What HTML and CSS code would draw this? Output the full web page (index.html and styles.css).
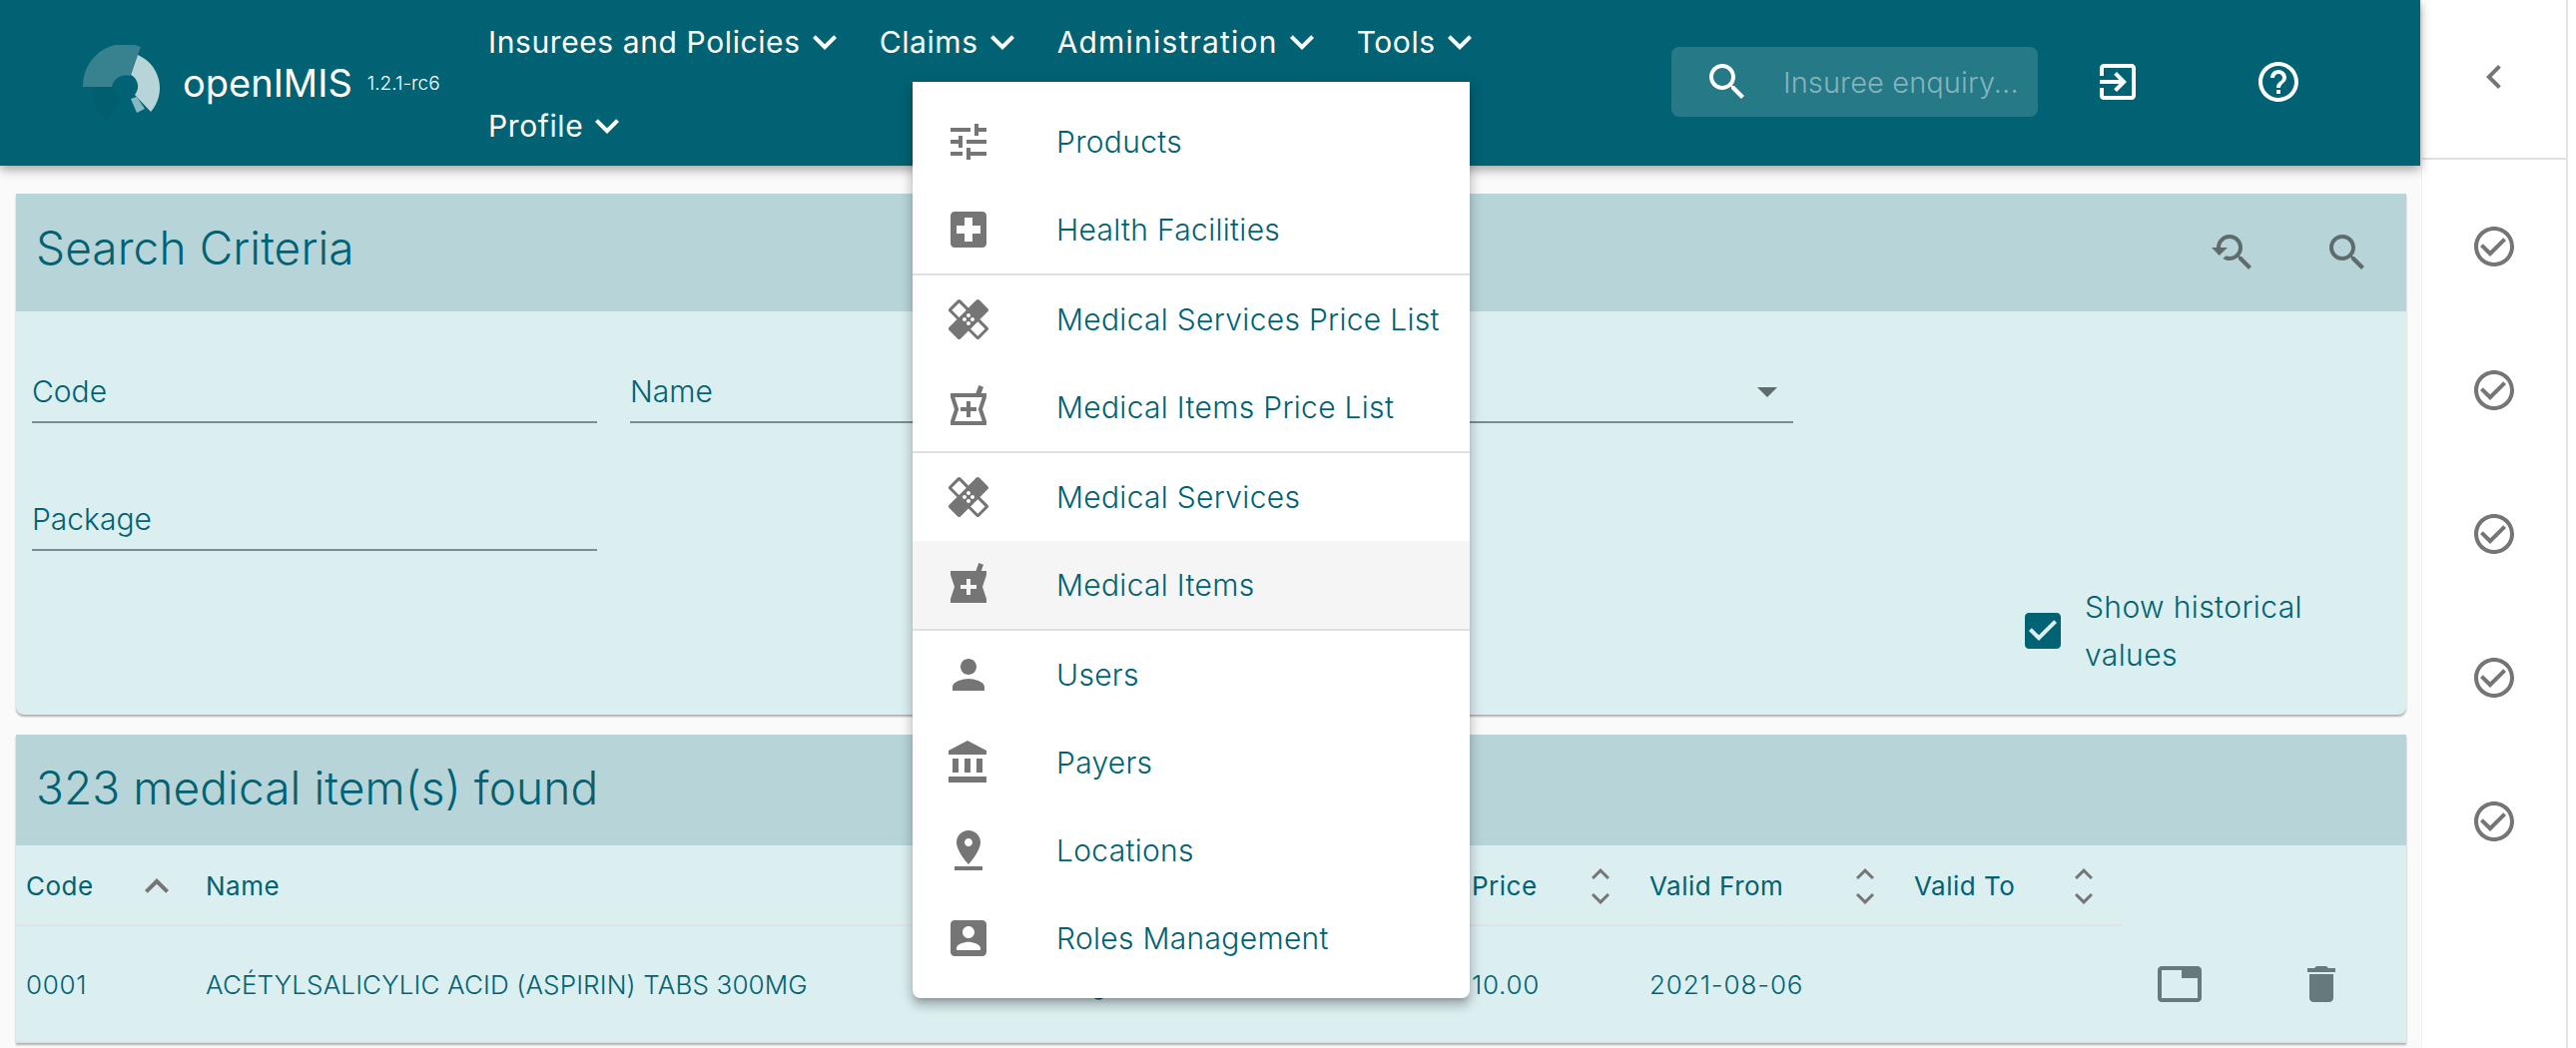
FILE: index.html
```html
<!DOCTYPE html>
<html lang="en">
  <head>
    <meta charset="UTF-8" />
    <title>openIMIS - Medical Items</title>
    <link rel="stylesheet" href="styles.css">
  </head>
  <body>
    <svg class="sprite" xmlns="http://www.w3.org/2000/svg">
      <symbol id="i-more" viewBox="0 0 24 24"><path d="M16.59 8.59L12 13.17 7.41 8.59 6 10l6 6 6-6z"/></symbol>
      <symbol id="i-less" viewBox="0 0 24 24"><path d="M12 8l-6 6 1.41 1.41L12 10.83l4.59 4.58L18 14z"/></symbol>
      <symbol id="i-left" viewBox="0 0 24 24"><path d="M15.41 7.41L14 6l-6 6 6 6 1.41-1.41L10.83 12z"/></symbol>
      <symbol id="i-search" viewBox="0 0 24 24"><path d="M15.5 14h-.79l-.28-.27C15.41 12.59 16 11.11 16 9.5 16 5.91 13.09 3 9.5 3S3 5.91 3 9.5 5.91 16 9.5 16c1.61 0 3.09-.59 4.23-1.57l.27.28v.79l5 4.99L20.49 19l-4.99-5zm-6 0C7.01 14 5 11.99 5 9.5S7.01 5 9.5 5 14 7.01 14 9.5 11.99 14 9.5 14z"/></symbol>
      <symbol id="i-refine" viewBox="0 0 24 24"><path d="M17.01 14h-.8l-.27-.27c.98-1.14 1.57-2.61 1.57-4.23 0-3.59-2.91-6.5-6.5-6.5s-6.5 3-6.5 6.5H2l3.84 4 4.16-4H6.51C6.51 7 8.53 5 11.01 5s4.5 2.01 4.5 4.5c0 2.48-2.02 4.5-4.5 4.5-.65 0-1.26-.14-1.82-.38L7.71 15.1c.97.57 2.09.9 3.3.9 1.61 0 3.08-.59 4.22-1.57l.27.27v.79l5.01 5L21.99 19l-4.98-5z"/></symbol>
      <symbol id="i-login" viewBox="0 0 24 24"><path d="M10.09 15.59L11.5 17l5-5-5-5-1.41 1.41L12.67 11H3v2h9.67l-2.58 2.59zM19 3H5c-1.11 0-2 .9-2 2v4h2V5h14v14H5v-4H3v4c0 1.1.89 2 2 2h14c1.1 0 2-.9 2-2V5c0-1.1-.9-2-2-2z"/></symbol>
      <symbol id="i-help" viewBox="0 0 24 24"><path d="M11 18h2v-2h-2v2zm1-16C6.48 2 2 6.48 2 12s4.48 10 10 10 10-4.48 10-10S17.52 2 12 2zm0 18c-4.41 0-8-3.59-8-8s3.59-8 8-8 8 3.59 8 8-3.59 8-8 8zm0-14c-2.21 0-4 1.79-4 4h2c0-1.1.9-2 2-2s2 .9 2 2c0 2-3 1.75-3 5h2c0-2.25 3-2.5 3-5 0-2.21-1.79-4-4-4z"/></symbol>
      <symbol id="i-check" viewBox="0 0 24 24"><path d="M16.59 7.58L10 14.17l-3.59-3.58L5 12l5 5 8-8zM12 2C6.48 2 2 6.48 2 12s4.48 10 10 10 10-4.48 10-10S17.52 2 12 2zm0 18c-4.42 0-8-3.58-8-8s3.58-8 8-8 8 3.58 8 8-3.58 8-8 8z"/></symbol>
      <symbol id="i-tune" viewBox="0 0 24 24"><path d="M3 17v2h6v-2H3zM3 5v2h10V5H3zm10 16v-2h8v-2h-8v-2h-2v6h2zM7 9v2H3v2h4v2h2V9H7zm14 4v-2H11v2h10zm-6-4h2V7h4V5h-4V3h-2v6z"/></symbol>
      <symbol id="i-hospital" viewBox="0 0 24 24"><path d="M19 3H5c-1.1 0-1.99.9-1.99 2L3 19c0 1.1.9 2 2 2h14c1.1 0 2-.9 2-2V5c0-1.1-.9-2-2-2zm-1 11h-4v4h-4v-4H6v-4h4V6h4v4h4v4z"/></symbol>
      <symbol id="i-healing" viewBox="0 0 24 24"><path d="M17.73 12.02l3.98-3.98c.39-.39.39-1.02 0-1.41l-4.34-4.34c-.39-.39-1.02-.39-1.41 0l-3.98 3.98L8 2.29C7.8 2.1 7.55 2 7.29 2c-.25 0-.51.1-.7.29L2.25 6.63c-.39.39-.39 1.02 0 1.41l3.98 3.98L2.25 16c-.39.39-.39 1.02 0 1.41l4.34 4.34c.39.39 1.02.39 1.41 0l3.98-3.98 3.98 3.98c.2.2.45.29.71.29.26 0 .51-.1.71-.29l4.34-4.34c.39-.39.39-1.02 0-1.41l-3.98-3.98zM12 9c.55 0 1 .45 1 1s-.45 1-1 1-1-.45-1-1 .45-1 1-1zm-4.71 1.96L3.66 7.34l3.63-3.63 3.62 3.62-3.62 3.63zM10 13c-.55 0-1-.45-1-1s.45-1 1-1 1 .45 1 1-.45 1-1 1zm2 2c-.55 0-1-.45-1-1s.45-1 1-1 1 .45 1 1-.45 1-1 1zm2-4c.55 0 1 .45 1 1s-.45 1-1 1-1-.45-1-1 .45-1 1-1zm2.66 9.34l-3.63-3.62 3.63-3.63 3.62 3.62-3.62 3.63z"/></symbol>
      <symbol id="i-pharmacy" viewBox="0 0 24 24"><path d="M21 5h-2.64l1.14-3.14L17.15 1l-1.46 4H3v2l2 6-2 6v2h18v-2l-2-6 2-6V5zm-5 9h-3v3h-2v-3H8v-2h3V9h2v3h3v2z"/></symbol>
      <symbol id="i-pharmacy-o" viewBox="0 0 24 24"><path d="M21 5h-2.64l1.14-3.14L17.15 1l-1.46 4H3v2l2 6-2 6v2h18v-2l-2-6 2-6V5zm-3.9 8.63L18.89 19H5.11l1.79-5.37.21-.63-.21-.63L5.11 7h13.78l-1.79 5.37-.21.63.21.63zM13 9h-2v3H8v2h3v3h2v-3h3v-2h-3z"/></symbol>
      <symbol id="i-person" viewBox="0 0 24 24"><path d="M12 12c2.21 0 4-1.79 4-4s-1.79-4-4-4-4 1.79-4 4 1.79 4 4 4zm0 2c-2.67 0-8 1.34-8 4v2h16v-2c0-2.66-5.33-4-8-4z"/></symbol>
      <symbol id="i-bank" viewBox="0 0 24 24"><path d="M4 10v7h3v-7H4zm6 0v7h3v-7h-3zM2 22h19v-3H2v3zm14-12v7h3v-7h-3zm-4.5-9L2 6v2h19V6l-9.5-5z"/></symbol>
      <symbol id="i-pin" viewBox="0 0 24 24"><path d="M18 8c0-3.31-2.69-6-6-6S6 4.69 6 8c0 4.5 6 11 6 11s6-6.5 6-11zm-8 0c0-1.1.9-2 2-2s2 .9 2 2-.89 2-2 2c-1.1 0-2-.9-2-2zM5 20v2h14v-2H5z"/></symbol>
      <symbol id="i-box" viewBox="0 0 24 24"><path d="M3 5v14c0 1.1.89 2 2 2h14c1.1 0 2-.9 2-2V5c0-1.1-.9-2-2-2H5c-1.11 0-2 .9-2 2zm12 4c0 1.66-1.34 3-3 3s-3-1.34-3-3 1.34-3 3-3 3 1.34 3 3zm-9 8c0-2 4-3.1 6-3.1s6 1.1 6 3.1v1H6v-1z"/></symbol>
      <symbol id="i-tab" viewBox="0 0 24 24"><path d="M21 3H3c-1.1 0-2 .9-2 2v14c0 1.1.9 2 2 2h18c1.1 0 2-.9 2-2V5c0-1.1-.9-2-2-2zm0 16H3V5h10v4h8v10z"/></symbol>
      <symbol id="i-delete" viewBox="0 0 24 24"><path d="M6 19c0 1.1.9 2 2 2h8c1.1 0 2-.9 2-2V7H6v12zM19 4h-3.5l-1-1h-5l-1 1H5v2h14V4z"/></symbol>
      <symbol id="i-checkbox" viewBox="0 0 24 24"><path d="M19 3H5c-1.11 0-2 .9-2 2v14c0 1.1.89 2 2 2h14c1.11 0 2-.89 2-2V5c0-1.1-.89-2-2-2zm-9 14l-5-5 1.41-1.41L10 14.17l7.59-7.59L19 8l-9 9z"/></symbol>
      <symbol id="i-drop" viewBox="0 0 24 24"><path d="M7 10l5 5 5-5z"/></symbol>
    </svg>

    <div class="app">
      <div class="main">
        <header class="appbar">
          <div class="brand">
            <svg class="logo" viewBox="0 0 80 76">
              <path fill="#005e6f" d="M9 42h21c1 6 4 9 7 11l-12 23C15 72 9 56 9 42z"/>
              <path fill="#38828f" d="M0 42A42 42 0 0 1 58 2L47 31A14 14 0 0 0 29 42z"/>
              <path fill="#b7d4d8" d="M55 10A36 36 0 0 1 68 67L52 50A13 13 0 0 0 48 30z"/>
              <path fill="#85b9c2" d="M48 54l6-2 8 12-8 4z"/>
            </svg>
            <span class="brand-name">openIMIS</span>
            <span class="brand-version">1.2.1-rc6</span>
          </div>
          <nav class="nav">
            <a class="nav-item">Insurees and Policies<svg class="icon"><use href="#i-more"/></svg></a>
            <a class="nav-item">Claims<svg class="icon"><use href="#i-more"/></svg></a>
            <a class="nav-item nav-wide">Administration<svg class="icon"><use href="#i-more"/></svg></a>
            <a class="nav-item">Tools<svg class="icon"><use href="#i-more"/></svg></a>
            <a class="nav-item">Profile<svg class="icon"><use href="#i-more"/></svg></a>
          </nav>
          <div class="enquiry">
            <svg class="icon"><use href="#i-search"/></svg>
            <span class="enquiry-text">Insuree enquiry...</span>
          </div>
          <svg class="icon bar-login"><use href="#i-login"/></svg>
          <svg class="icon bar-help"><use href="#i-help"/></svg>
        </header>

        <ul class="menu">
          <li class="menu-item"><svg class="icon"><use href="#i-tune"/></svg>Products</li>
          <li class="menu-item menu-last"><svg class="icon"><use href="#i-hospital"/></svg>Health Facilities</li>
          <li class="menu-item"><svg class="icon"><use href="#i-healing"/></svg>Medical Services Price List</li>
          <li class="menu-item menu-last"><svg class="icon"><use href="#i-pharmacy-o"/></svg>Medical Items Price List</li>
          <li class="menu-item"><svg class="icon"><use href="#i-healing"/></svg>Medical Services</li>
          <li class="menu-item menu-last menu-active"><svg class="icon"><use href="#i-pharmacy"/></svg>Medical Items</li>
          <li class="menu-item"><svg class="icon"><use href="#i-person"/></svg>Users</li>
          <li class="menu-item"><svg class="icon"><use href="#i-bank"/></svg>Payers</li>
          <li class="menu-item"><svg class="icon"><use href="#i-pin"/></svg>Locations</li>
          <li class="menu-item"><svg class="icon"><use href="#i-box"/></svg>Roles Management</li>
        </ul>

        <div class="content">
          <section class="panel">
            <div class="panel-head">
              <h2>Search Criteria</h2>
              <div class="panel-actions">
                <svg class="icon"><use href="#i-refine"/></svg>
                <svg class="icon"><use href="#i-search"/></svg>
              </div>
            </div>
            <form class="filters">
              <div class="field">Code</div>
              <div class="field">Name</div>
              <div class="field field-select"><svg class="icon"><use href="#i-drop"/></svg></div>
              <div class="field field-start">Package</div>
              <label class="historical">
                <svg class="icon"><use href="#i-checkbox"/></svg>
                <span>Show historical values</span>
              </label>
            </form>
          </section>

          <section class="panel panel-results">
            <div class="panel-head panel-head-low">
              <h2>323 medical item(s) found</h2>
            </div>
            <table class="results">
              <colgroup>
                <col class="c-code" /><col class="c-name" /><col class="c-type" /><col class="c-pack" />
                <col class="c-price" /><col class="c-from" /><col class="c-to" /><col class="c-act" /><col />
              </colgroup>
              <thead>
                <tr>
                  <th><div class="th-in">Code<svg class="icon sort-one"><use href="#i-less"/></svg></div></th>
                  <th><div class="th-in">Name</div></th>
                  <th><div class="th-in">Type</div></th>
                  <th><div class="th-in">Package</div></th>
                  <th><div class="th-in">Price<span class="sort"><svg class="icon"><use href="#i-less"/></svg><svg class="icon"><use href="#i-more"/></svg></span></div></th>
                  <th><div class="th-in">Valid From<span class="sort"><svg class="icon"><use href="#i-less"/></svg><svg class="icon"><use href="#i-more"/></svg></span></div></th>
                  <th><div class="th-in">Valid To<span class="sort"><svg class="icon"><use href="#i-less"/></svg><svg class="icon"><use href="#i-more"/></svg></span></div></th>
                  <th class="th-blank"></th>
                  <th class="th-blank"></th>
                </tr>
              </thead>
              <tbody>
                <tr>
                  <td class="td-num">0001</td>
                  <td>ACÉTYLSALICYLIC ACID (ASPIRIN) TABS 300MG</td>
                  <td>Drug</td>
                  <td></td>
                  <td class="td-num">10.00</td>
                  <td class="td-num td-date">2021-08-06</td>
                  <td></td>
                  <td class="td-act"><svg class="icon"><use href="#i-tab"/></svg></td>
                  <td class="td-act"><svg class="icon"><use href="#i-delete"/></svg></td>
                </tr>
              </tbody>
            </table>
          </section>
        </div>
      </div>

      <aside class="side">
        <div class="side-top"><svg class="icon"><use href="#i-left"/></svg></div>
        <div class="side-checks">
          <svg class="icon"><use href="#i-check"/></svg>
          <svg class="icon"><use href="#i-check"/></svg>
          <svg class="icon"><use href="#i-check"/></svg>
          <svg class="icon"><use href="#i-check"/></svg>
          <svg class="icon"><use href="#i-check"/></svg>
        </div>
      </aside>
    </div>
  </body>
</html>
```

FILE: styles.css
```css
/* Base */
* {
  box-sizing: border-box;
}
html,
body {
  margin: 0;
  height: 100%;
  overflow: hidden;
}
body {
  background-color: #fff;
  color: #006273;
  font-family: Inter, "Noto Sans", sans-serif;
  font-weight: 300;
}
.sprite {
  display: none;
}
.icon {
  width: 48px;
  height: 48px;
  flex: none;
  fill: currentColor;
  display: block;
}
.app {
  display: flex;
  height: 1050px;
}
.main {
  position: relative;
  width: 2424px;
  flex: none;
  background-color: #fafafa;
}

/* App bar */
.appbar {
  display: flex;
  align-items: flex-start;
  height: 166px;
  padding-left: 83px;
  background-color: #006273;
  color: #fff;
  box-shadow: 0 4px 10px rgba(0, 0, 0, 0.35);
  position: relative;
}
.brand {
  display: flex;
  align-items: center;
  width: 406px;
  height: 166px;
}
.logo {
  width: 80px;
  height: 76px;
  margin-right: 20px;
}
.brand-name {
  font-size: 38px;
  font-weight: 400;
}
.brand-version {
  font-size: 19px;
  margin-left: 15px;
}
.nav {
  display: flex;
  flex-wrap: wrap;
  width: 1000px;
  margin-right: 185px;
  gap: 0 31px;
}
.nav-item {
  display: flex;
  align-items: center;
  height: 84px;
  font-size: 30px;
  font-weight: 400;
  letter-spacing: 0.6px;
}
.nav-wide {
  letter-spacing: 1.2px;
}
.enquiry {
  display: flex;
  align-items: center;
  width: 367px;
  height: 70px;
  margin-top: 47px;
  padding-left: 32px;
  border-radius: 8px;
  background-color: rgba(255, 255, 255, 0.15);
}
.enquiry-text {
  margin-left: 32px;
  font-size: 29px;
  letter-spacing: 0.1px;
  color: rgba(255, 255, 255, 0.45);
}
.bar-login {
  margin: 58px 0 0 56px;
}
.bar-help {
  margin: 58px 0 0 113px;
}

/* Dropdown */
.menu {
  position: absolute;
  z-index: 5;
  top: 82px;
  left: 914px;
  width: 558px;
  margin: 0;
  padding: 16px 0;
  list-style: none;
  background-color: #fff;
  border-radius: 0 0 8px 8px;
  box-shadow: 0 5px 5px -3px rgba(0, 0, 0, 0.2), 0 8px 10px 1px rgba(0, 0, 0, 0.14), 0 3px 14px 2px rgba(0, 0, 0, 0.12);
}
.menu-item {
  display: flex;
  align-items: center;
  height: 88px;
  padding-left: 32px;
  font-size: 30px;
  letter-spacing: 0.3px;
}
.menu-item .icon {
  margin-right: 64px;
  color: #757575;
}
.menu-last {
  height: 90px;
  border-bottom: 2px solid #e0e0e0;
}
.menu-active {
  background-color: #f5f5f5;
}

/* Panels */
.content {
  padding: 28px 14px 0 16px;
}
.panel {
  background-color: #dbeef0;
  border-radius: 0 0 8px 8px;
  box-shadow: 0 2px 2px rgba(0, 0, 0, 0.3);
}
.panel-results {
  margin-top: 20px;
  border-radius: 0;
}
.panel-head {
  display: flex;
  align-items: center;
  justify-content: space-between;
  height: 118px;
  padding: 0 35px 0 20px;
  background-color: #b7d4d8;
}
.panel-head-low {
  height: 111px;
}
.panel-head h2 {
  margin: 0 0 10px;
  font-size: 46px;
  font-weight: 300;
  letter-spacing: 0.1px;
}
.panel-head-low h2 {
  margin-bottom: 6px;
}
.panel-actions {
  display: flex;
  gap: 68px;
  color: #5f6b6d;
}

/* Search form */
.filters {
  display: grid;
  grid-template-columns: 566px 566px 566px 1fr;
  column-gap: 33px;
  row-gap: 64px;
  padding: 48px 16px 36px;
}
.field {
  display: flex;
  align-items: center;
  justify-content: space-between;
  height: 64px;
  padding-top: 2px;
  font-size: 30px;
  border-bottom: 2px solid #7a8c8f;
}
.field-select {
  justify-content: flex-end;
}
.field-select .icon {
  color: #5f6b6d;
  margin-right: 2px;
}
.field-start {
  grid-column: 1;
}
.historical {
  grid-column: 4;
  grid-row: 3;
  margin-top: -32px;
  display: flex;
  align-items: center;
  padding-left: 193px;
  font-size: 30px;
  letter-spacing: 0.4px;
  line-height: 48px;
}
.historical .icon {
  margin-right: 18px;
}
.historical span {
  width: 270px;
}

/* Results table */
.results {
  width: 100%;
  border-collapse: collapse;
  table-layout: fixed;
  font-size: 26px;
  letter-spacing: 0.15px;
}
.c-code {
  width: 180px;
}
.c-name {
  width: 843px;
}
.c-type {
  width: 215px;
}
.c-pack {
  width: 210px;
}
.c-price {
  width: 178px;
}
.c-from {
  width: 265px;
}
.c-to {
  width: 219px;
}
.c-act {
  width: 142px;
}
.results th {
  height: 80px;
  padding: 2px 21px 0 10px;
  font-weight: 400;
  text-align: left;
  letter-spacing: 0.5px;
  border-bottom: 2px solid #dfe3e4;
}
.results .th-blank {
  border-bottom: 0;
}
.th-in {
  display: flex;
  align-items: center;
  justify-content: space-between;
}
.sort {
  display: flex;
  flex-direction: column;
  color: #757575;
}
.sort .icon {
  width: 36px;
  height: 36px;
  margin: -6px 0;
}
.sort-one {
  margin-right: -6px;
  color: #757575;
}
.results td {
  height: 117px;
  padding: 2px 10px 0;
  border-bottom: 2px solid #dfe3e4;
}
.results .td-num {
  letter-spacing: 0.7px;
}
.results .td-date {
  letter-spacing: 0.9px;
}
.results .td-act {
  padding-left: 33px;
  color: #67797c;
}

/* Right drawer */
.side {
  width: 146px;
  flex: none;
  margin-left: 2px;
  background-color: #fff;
  border-right: 2px solid #e4e4e4;
  color: #757575;
  box-shadow: -1px 0 2px rgba(0, 0, 0, 0.08);
}
.side-top {
  display: flex;
  align-items: center;
  justify-content: center;
  height: 160px;
  padding-bottom: 4px;
  border-bottom: 2px solid #e0e0e0;
}
.side-checks {
  display: flex;
  flex-direction: column;
  align-items: center;
  gap: 96px;
  padding-top: 63px;
}
```
